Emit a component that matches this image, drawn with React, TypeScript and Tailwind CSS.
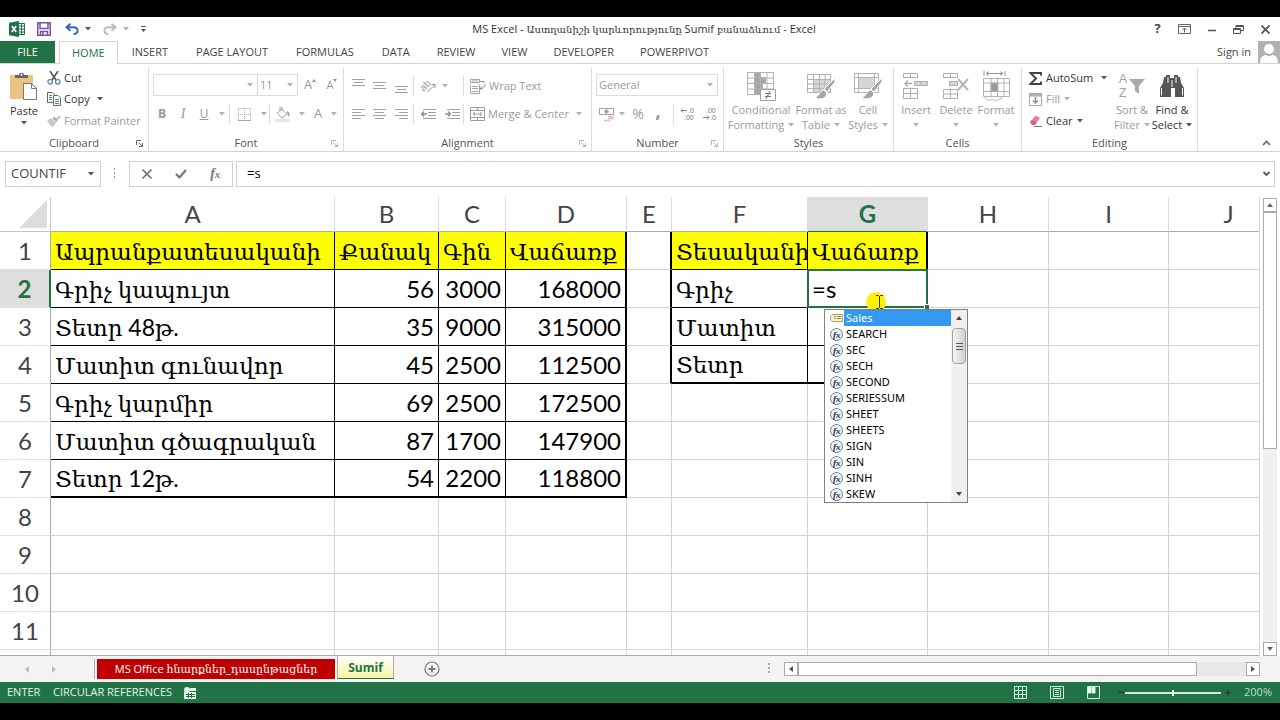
import React, { useState } from 'react';
import clsx from 'clsx';

/* ---------- small shared pieces ---------- */

const Caret: React.FC<{ dark?: boolean }> = ({ dark = false }) => (
  <svg width="6" height="4" viewBox="0 0 6 4" className={clsx('shrink-0', dark ? 'text-[#555]' : 'text-[#b0b0b0]')}>
    <path d="M0 0h6L3 3.5z" fill="currentColor" />
  </svg>
);

const Separator = () => <span className="h-5 w-px shrink-0 bg-[#dcdcdc]" />;

const Launcher: React.FC<{ dark?: boolean }> = ({ dark = false }) => (
  <svg width="7" height="7" viewBox="0 0 7 7" fill="none" stroke={dark ? '#666' : '#b5b5b5'}>
    <path d="M.5 5V.5H5M2.5 2.5l3.5 3.5M6.5 3v3.5H3" />
  </svg>
);

interface GroupProps {
  label: string;
  width: string;
  launcher?: 'dark' | 'light';
  children: React.ReactNode;
}

const Group: React.FC<GroupProps> = ({ label, width, launcher, children }) => (
  <section aria-label={label} className={clsx('flex shrink-0 flex-col border-r border-[#dcdcdc]', width)}>
    <div className="flex-1">{children}</div>
    <div className="flex h-4 items-center px-1 text-[#555]">
      <span className="w-2" />
      <span className="flex-1 text-center">{label}</span>
      <button aria-label={`${label} settings`} className="w-2">
        {launcher && <Launcher dark={launcher === 'dark'} />}
      </button>
    </div>
  </section>
);

interface ToolProps {
  label: string;
  width: string;
  children: React.ReactNode;
}

const Tool: React.FC<ToolProps> = ({ label, width, children }) => (
  <button aria-label={label} className={clsx('flex h-5 shrink-0 items-center justify-center', width)}>
    {children}
  </button>
);

interface BigButtonProps {
  icon: React.ReactNode;
  lines: string[];
  width: string;
  dark?: boolean;
}

const BigButton: React.FC<BigButtonProps> = ({ icon, lines, width, dark = false }) => (
  <button className={clsx('flex shrink-0 flex-col items-center', width, dark ? 'text-[#333]' : 'text-[#9a9a9a]')}>
    <span className="flex h-8 items-center">{icon}</span>
    <span className="h-[15px] leading-[15px] whitespace-nowrap">{lines[0]}</span>
    <span className="flex h-[15px] items-center gap-1 leading-[15px] whitespace-nowrap">
      {lines[1]}
      <Caret dark={dark} />
    </span>
  </button>
);

/* ---------- icons ---------- */

const ExcelLogo = () => (
  <svg width="16" height="16" viewBox="0 0 16 16">
    <path d="M9 2.500h6.500v11H9z" fill="#fff" stroke="#1e7145" />
    <path d="M10 5h5M10 8h5M10 11h5M12.500 3v10" stroke="#1e7145" />
    <path d="M0 1.800 10 0v16L0 14.200z" fill="#1e7145" />
    <path d="m2.800 5 4.400 6M7.200 5l-4.400 6" stroke="#fff" strokeWidth="1.600" />
  </svg>
);

const SaveIcon = () => (
  <svg width="14" height="14" viewBox="0 0 14 14" fill="none" stroke="#7b4fa3" strokeWidth="1.500">
    <path d="M.8.8h12.400v12.400H.8zM3 1v5.500h8V1M3.500 13V9.500h7V13M6 10v3" />
  </svg>
);

const UndoIcon = () => (
  <svg width="14" height="12" viewBox="0 0 14 12" fill="none" stroke="#2b6cb5" strokeWidth="2">
    <path d="M5.500.8 1.500 4.300l4 3.500M2 4.300h6.500c5.500.2 5.500 6.200 0 7" />
  </svg>
);

const RedoIcon = () => (
  <svg width="14" height="12" viewBox="0 0 14 12" fill="none" stroke="#bdbdbd" strokeWidth="2">
    <path d="m8.500.8 4 3.500-4 3.500M12 4.300H5.500c-5.500.2-5.500 6.200 0 7" />
  </svg>
);

const PasteIcon = () => (
  <svg width="28" height="29" viewBox="0 0 28 29">
    <rect x="0" y="3" width="23" height="24" rx="1" fill="#eac282" />
    <path d="M5 6V3h4c0-3 5-3 5 0h4v3z" fill="#666" />
    <circle cx="11.500" cy="2.800" r="1" fill="#fff" />
    <path d="M13.500 11.500h8l5 5v11h-13z" fill="#fff" stroke="#777" />
    <path d="M21.500 11.500v5h5" fill="none" stroke="#777" />
  </svg>
);

const CutIcon = () => (
  <svg width="14" height="14" viewBox="0 0 14 14" fill="none">
    <path d="M3 0 9 9M11 0 5 9" stroke="#555" strokeWidth="1.600" />
    <circle cx="3.200" cy="10.800" r="2.300" stroke="#4f7fab" strokeWidth="1.200" />
    <circle cx="10.800" cy="10.800" r="2.300" stroke="#4f7fab" strokeWidth="1.200" />
  </svg>
);

const CopyIcon = () => (
  <svg width="14" height="14" viewBox="0 0 14 14" fill="#fff" stroke="#666">
    <path d="M.5.5h5l2 2v8h-7z" />
    <path d="M2 3.500h3M2 5.500h3M2 7.500h3" stroke="#4f7fab" />
    <path d="M6.500 3.500h4.500l2.500 2.500v7.500h-7z" />
    <path d="M8 7.500h4M8 9.500h4M8 11.500h4" stroke="#4f7fab" />
  </svg>
);

const PainterIcon = () => (
  <svg width="14" height="13" viewBox="0 0 15 13">
    <path d="m0 5 5-2 5 5-4 4.500C4 12 1.500 8 0 5z" fill="#c9c9c9" />
    <path d="m6 3 2-1.500 3.500 4L10 7z" fill="#a8a8a8" />
    <path d="m9.500 3.500 4-3L15 2l-4 3z" fill="#b5b5b5" />
  </svg>
);

const FontSizeIcon: React.FC<{ grow?: boolean }> = ({ grow = false }) => (
  <svg width="4" height="3" viewBox="0 0 4 3" className="mb-[9px]" fill="#8a97a8">
    <path d={grow ? 'M0 3h4L2 0z' : 'M0 0h4L2 3z'} />
  </svg>
);

const linePaths = {
  top: 'M0 1.500h13M2 4.500h9M0 7.500h13',
  middle: 'M0 4.500h13M2 7.500h9M0 10.500h13',
  bottom: 'M0 8.500h13M2 11.500h9M0 14.500h13',
  left: 'M0 3.500h13M0 6.500h9M0 9.500h13M0 12.500h9',
  center: 'M0 3.500h13M2 6.500h9M0 9.500h13M2 12.500h9',
  right: 'M0 3.500h13M4 6.500h9M0 9.500h13M4 12.500h9',
};

const LinesIcon: React.FC<{ kind: keyof typeof linePaths }> = ({ kind }) => (
  <svg width="13" height="16" viewBox="0 0 13 16" stroke="#a0a0a0">
    <path d={linePaths[kind]} />
  </svg>
);

const IndentIcon: React.FC<{ increase?: boolean }> = ({ increase = false }) => (
  <svg width="15" height="12" viewBox="0 0 15 12" fill="none" stroke="#a0a0a0">
    <path d="M2 1.500h13M7 4.500h8M7 7.500h8M2 10.500h13" />
    <path d={increase ? 'M0 6h5M3 3.500 5.500 6 3 8.500' : 'M6 6H1M3 3.500.5 6 3 8.500'} stroke="#7f93a8" strokeWidth="1.400" />
  </svg>
);

const OrientationIcon = () => (
  <svg width="18" height="18" viewBox="0 0 18 18" className="overflow-visible">
    <text x="1" y="12" fontSize="10" fill="#999" transform="rotate(-45 6 9)" className="font-['Liberation_Sans',sans-serif]">
      ab
    </text>
    <path d="m8 15 8-7M12.500 7.500H16V11" fill="none" stroke="#999" />
  </svg>
);

const WrapIcon = () => (
  <svg width="16" height="15" viewBox="0 0 16 15" fill="none" stroke="#a5a5a5">
    <path d="M.5.5h9v3h-9zM.5 5.500v9h9v-9M2 7.500h6M2 9.500h6M2 12.500h6" />
    <path d="M2 2h6" />
    <path d="M10 2.500h4v1.500M15 5c0 4-2 4.500-5 4.500M12 7.500l-2 2 2 2" stroke="#8093aa" />
  </svg>
);

const MergeIcon = () => (
  <svg width="15" height="14" viewBox="0 0 15 14" fill="none" stroke="#9c9c9c">
    <path d="M.5.5h14v13H.5zM.5 3.500h14M.5 10.500h14M7.500.5v3M7.500 10.500v3" />
    <path d="M3 7h9M5 5 3 7l2 2M10 5l2 2-2 2" stroke="#8a9bb0" />
  </svg>
);

const BordersIcon = () => (
  <svg width="13" height="13" viewBox="0 0 13 13" fill="none" stroke="#a5a5a5">
    <path d="M.5.5h12v12H.5zM6.500 0v13M0 6.500h13" strokeDasharray="1 1" />
    <path d="M0 12.500h13" />
  </svg>
);

const FillColorIcon = () => (
  <svg width="16" height="15" viewBox="0 0 16 15">
    <path d="m2 6 5-4 5 5-5 4zM5 4V0h2v4" fill="#fff" stroke="#a5a5a5" />
    <path d="M12 4c3 1 3 4 2 6-1-1-2-3-2-6z" fill="#a5a5a5" />
    <path d="M0 12h15v3H0z" fill="#eee2e2" />
  </svg>
);

const MoneyIcon = () => (
  <svg width="16" height="15" viewBox="0 0 16 15" fill="none" stroke="#a3a3a3">
    <path d="M.5 1.500h14v6H.5z" />
    <circle cx="7.500" cy="4.500" r="1.700" fill="#a3a3a3" />
    <path d="M9 9.500h6M9 11.500h6M5 13.500h6" stroke="#dcbcbc" strokeWidth="1.500" />
  </svg>
);

const DecimalIcon: React.FC<{ increase?: boolean }> = ({ increase = false }) => (
  <svg width="15" height="16" viewBox="0 0 15 16" fontSize="7" fill="#777" className="font-['Liberation_Sans',sans-serif]">
    <text x={increase ? 8 : 4} y="7">{increase ? '.0' : '.00'}</text>
    <text x={increase ? 4 : 8} y="14">{increase ? '.00' : '.0'}</text>
    <path
      d={increase ? 'M7 4.500H1M3 2.500l-2 2 2 2' : 'M1 11.500h6M5 9.500l2 2-2 2'}
      fill="none"
      stroke="#888"
    />
  </svg>
);

const ConditionalIcon = () => (
  <svg width="29" height="29" viewBox="0 0 29 29" fill="#fff" stroke="#b3b3b3">
    <path d="M.5.5h26v22H.5z" />
    <path d="M7.500.5h6v5h5v6h-3v6h-2v5h-6z" fill="#a6a6a6" />
    <path d="M.5 6h26M.5 11.500h26M.5 17h26M7.500.5v22M13.500.5v22M20 .5v22" fill="none" />
    <path d="M13.500 17.500h15v11h-15z" stroke="#a0a0a0" />
    <path d="M18 21.500h6M18 24.500h6M23 19l-4 8" stroke="#777" fill="none" />
  </svg>
);

const Brush = () => (
  <>
    <path d="m28 6-11 11 3 3 8-10z" fill="#a6a6a6" stroke="#fff" />
    <path d="M17 18c-4 0-4 5-9 8 5 2 11 1 12-5z" fill="#a6a6a6" stroke="#fff" />
  </>
);

const TableFormatIcon = () => (
  <svg width="29" height="29" viewBox="0 0 29 29" fill="#fff" stroke="#b3b3b3">
    <path d="M.5 2.500h23v18H.5z" />
    <path d="M6.500 7.500h17v13h-17z" fill="#d6d6d6" />
    <path d="M.5 7.500h23M.5 12h23M.5 16.500h23M6.500 2.500v18M12.500 2.500v18M18 2.500v18" fill="none" />
    <Brush />
  </svg>
);

const CellStylesIcon = () => (
  <svg width="29" height="29" viewBox="0 0 29 29" fill="#fff" stroke="#b3b3b3">
    <path d="M.5 1.500h24v19H.5zM.5 5.500h24M.5 16.500h24M4.500 1.500v19M20.500 1.500v19" />
    <path d="M5 6h15v10H5z" fill="#d6d6d6" stroke="none" />
    <Brush />
  </svg>
);

const InsertIcon = () => (
  <svg width="26" height="27" viewBox="0 0 26 27" fill="#fff" stroke="#adadad">
    <path d="M.5.5h14v4H.5zM7.500.5v4M.5 15.500h14v10H.5zM7.500 15.500v10M.5 20.500h14" />
    <path d="M11.500 8.500h13v4h-13zM18 8.500v4" fill="#d6d6d6" />
    <path d="M9 10.500H2M5 7.500l-3 3 3 3" fill="none" strokeWidth="1.400" />
  </svg>
);

const DeleteIcon = () => (
  <svg width="26" height="27" viewBox="0 0 26 27" fill="#fff" stroke="#adadad">
    <path d="M.5.5h14v4H.5zM7.500.5v4M.5 16.500h14v9H.5zM7.500 16.500v9M.5 21h14" />
    <path d="M6.500 8.500h8v4h-8z" fill="#d6d6d6" />
    <path d="m15 6 10 11M25 6 15 17" stroke="#bfb3b3" strokeWidth="2" />
  </svg>
);

const FormatIcon = () => (
  <svg width="27" height="30" viewBox="0 0 27 30" fill="#fff" stroke="#b3b3b3">
    <path d="M1 0v5M22 0v5M3 2.500h17M6 .5l-3 2 3 2M17 .5l3 2-3 2" fill="none" stroke="#999" />
    <path d="M.5 7.500h26v18H.5z" />
    <path d="M.5 12h26M.5 20.500h26M8 7.500v18M14.500 7.500v18M21 7.500v18" />
    <path d="M8 12h7v8.500H8z" fill="#999" />
    <path d="M2 26c1 4 5 4 7 2 2 2 5 2 7 0h2l1-2" />
  </svg>
);

const SigmaIcon = () => (
  <svg width="13" height="13" viewBox="0 0 13 13" fill="none" stroke="#444" strokeWidth="2">
    <path d="M12 3.500V1H1.500L7 6.500 1.500 12H12V9.500" />
  </svg>
);

const FillIcon = () => (
  <svg width="13" height="13" viewBox="0 0 13 13" fill="none" stroke="#a5a5a5">
    <path d="M.5.5h12v12H.5z" />
    <path d="M1 1h11v2H1z" fill="#c4c4c4" />
    <path d="M6.500 4v6M4 7.500l2.500 2.500L9 7.500" stroke="#8094a8" strokeWidth="1.500" />
  </svg>
);

const ClearIcon = () => (
  <svg width="13" height="12" viewBox="0 0 13 12">
    <path d="m1 7 6-6.500 4 2.500-5 7H3z" fill="#e57f95" />
    <path d="m1 7 2-2 4.500 3L6 10H3z" fill="#d96480" />
    <path d="M5 11.500h8" stroke="#777" />
  </svg>
);

const SortIcon = () => (
  <svg width="28" height="28" viewBox="0 0 28 28" fill="#a0a0a0" className="font-['Liberation_Sans',sans-serif]">
    <text x="1" y="11" fontSize="12">A</text>
    <text x="1" y="25" fontSize="12">Z</text>
    <path d="M11 7h16l-6 7v8l-4-3v-5z" fill="#a9a9a9" />
  </svg>
);

const FindIcon = () => (
  <svg width="26" height="23" viewBox="0 0 26 23" fill="#555">
    <path d="M5 2h2V0h4v3h4V0h4v2h2l1 6 3 5v9h-9v-9h-4v9H1v-9l3-5z" />
    <path d="M2.500 13v7.500M23.500 13v7.500M9 2v6M17 2v6M13 5v7" stroke="#fff" />
  </svg>
);

const FxBadge = () => (
  <svg width="13" height="13" viewBox="0 0 13 13" className="shrink-0">
    <circle cx="6.500" cy="6.500" r="6" fill="#eef2f8" stroke="#6b7d96" />
    <text x="3" y="9.500" fontSize="9" fontWeight="bold" fontStyle="italic" fill="#27364d" className="font-['Liberation_Serif',serif]">
      fx
    </text>
  </svg>
);

const NameBadge = () => (
  <svg width="13" height="9" viewBox="0 0 13 9" className="shrink-0">
    <path d="M3 .5h9.500v7H3L.5 5.500v-3z" fill="#fbf7cf" stroke="#a8a25a" />
    <path d="M4 2.500h2M4 4.500h2M7 2.500h4M7 4.500h4" stroke="#8a8648" />
  </svg>
);

/* ---------- ribbon ---------- */

const tabs = ['HOME', 'INSERT', 'PAGE LAYOUT', 'FORMULAS', 'DATA', 'REVIEW', 'VIEW', 'DEVELOPER', 'POWERPIVOT'];

const windowButton = 'flex w-[27px] items-center justify-center';

const TitleBar = () => (
  <header className="flex h-6 shrink-0 items-center text-[#444]">
    <div className="flex flex-1 items-center pl-[9px]">
      <ExcelLogo />
      <button aria-label="Save" className="ml-3">
        <SaveIcon />
      </button>
      <button aria-label="Undo" className="ml-[14px] flex items-center gap-[6px]">
        <UndoIcon />
        <Caret dark />
      </button>
      <button aria-label="Redo" className="ml-3 flex items-center gap-[6px]">
        <RedoIcon />
        <Caret />
      </button>
      <button aria-label="Customize toolbar" className="ml-3">
        <svg width="5" height="7" viewBox="0 0 5 7" fill="#555">
          <path d="M0 0h5v1H0zM0 3h5L2.500 6z" />
        </svg>
      </button>
    </div>
    <h1 className="text-[11px] text-[#333]">
      MS Excel - <span className="text-[10px]">Աստղանիշի կարևորությունը</span> Sumif{' '}
      <span className="text-[10px]">բանաձևում</span> - Excel
    </h1>
    <div className="flex flex-1 items-center justify-end pr-px">
      <button aria-label="Help" className={clsx(windowButton, 'text-[13px] font-bold')}>?</button>
      <button aria-label="Ribbon display options" className={windowButton}>
        <svg width="13" height="10" viewBox="0 0 13 10" fill="none" stroke="#666">
          <path d="M.5.5h12v9H.5zM.5 2.500h12M6.500 8.500v-4M4.500 6l2-2 2 2" />
        </svg>
      </button>
      <button aria-label="Minimize" className={windowButton}>
        <svg width="14" height="10" viewBox="0 0 14 10" stroke="#555" strokeWidth="1.500">
          <path d="M3 6.500h8" />
        </svg>
      </button>
      <button aria-label="Restore" className={windowButton}>
        <svg width="11" height="9" viewBox="0 0 11 9" fill="none" stroke="#555">
          <path d="M.5 3.500h7v5h-7zM.5 4.500h7M3 3V.5h7.500v5H8M3 1.500h7" />
        </svg>
      </button>
      <button aria-label="Close" className={windowButton}>
        <svg width="9" height="9" viewBox="0 0 9 9" stroke="#555" strokeWidth="1.800">
          <path d="m.5.5 8 8M8.500.5l-8 8" />
        </svg>
      </button>
    </div>
  </header>
);

const TabBar = () => (
  <nav className="flex h-[23px] shrink-0 border-b border-[#d4d4d4] text-[#444]">
    <button className="w-[55px] bg-[#217346] text-white">FILE</button>
    <div className="ml-1 flex flex-1">
      {tabs.map((tab, i) => (
        <button
          key={tab}
          className={clsx(
            i === 0 && '-mb-px border border-b-0 border-[#d4d4d4] bg-white px-3 text-[#217346]',
            i > 0 && i < 5 && 'px-[14px]',
            i >= 5 && 'px-[13px]'
          )}
        >
          {tab}
        </button>
      ))}
    </div>
    <a href="#signin" className="flex items-center text-[#444]">Sign in</a>
    <svg width="22" height="22" viewBox="0 0 22 22" className="ml-[7px]">
      <path d="M0 0h22v22H0z" fill="#b1b1b1" />
      <circle cx="11" cy="8" r="5" fill="#fff" />
      <path d="M2 22c0-6 3-8 6-8 2 1.500 4 1.500 6 0 3 0 6 2 6 8z" fill="#fff" />
    </svg>
  </nav>
);

const selectClass = 'h-full w-full appearance-none bg-transparent pl-[2px] text-[#999] outline-none';

interface SelectBoxProps {
  label: string;
  value: string;
  width: string;
}

const SelectBox: React.FC<SelectBoxProps> = ({ label, value, width }) => (
  <label className={clsx('flex h-[22px] items-center border border-[#dcdcdc] pr-1', width)}>
    <select aria-label={label} className={selectClass} defaultValue={value}>
      <option>{value}</option>
    </select>
    <Caret />
  </label>
);

const Ribbon = () => (
  <div className="flex h-[88px] shrink-0 border-b border-[#d4d4d4] pt-1 text-[#333]">
    <Group label="Clipboard" width="w-[149px]" launcher="dark">
      <div className="flex pl-1">
        <button className="flex w-10 flex-col items-center pt-1">
          <PasteIcon />
          <span className="h-5 leading-5">Paste</span>
          <Caret dark />
        </button>
        <div className="flex flex-col pl-[3px]">
          <button className="flex h-5 items-center gap-[3px]">
            <CutIcon /> Cut
          </button>
          <button className="flex h-[22px] items-center gap-[3px]">
            <CopyIcon /> Copy
            <span className="ml-1"><Caret dark /></span>
          </button>
          <button className="flex h-[22px] items-center gap-[3px] whitespace-nowrap text-[#9a9a9a]">
            <PainterIcon /> Format Painter
          </button>
        </div>
      </div>
    </Group>

    <Group label="Font" width="w-[195px]" launcher="light">
      <div className="flex items-center pt-[6px] pl-1 text-[#999]">
        <SelectBox label="Font name" value="" width="w-[105px]" />
        <SelectBox label="Font size" value="11" width="w-10 border-l-0" />
        <Tool label="Increase font size" width="w-6">
          <span className="text-[13px]">A</span>
          <FontSizeIcon grow />
        </Tool>
        <Tool label="Decrease font size" width="w-5">
          <span className="text-[11px]">A</span>
          <FontSizeIcon />
        </Tool>
      </div>
      <div className="flex items-center pt-2 pl-[2px] text-[#999]">
        <Tool label="Bold" width="w-[22px]"><b className="text-xs">B</b></Tool>
        <Tool label="Italic" width="w-5"><i className="font-['Liberation_Serif',serif] text-sm">I</i></Tool>
        <Tool label="Underline" width="w-[22px]"><u className="text-xs">U</u></Tool>
        <Tool label="Underline style" width="w-[14px]"><Caret /></Tool>
        <Separator />
        <Tool label="Borders" width="w-7"><BordersIcon /></Tool>
        <Tool label="Border style" width="w-[11px]"><Caret /></Tool>
        <Separator />
        <Tool label="Fill color" width="w-[26px]"><FillColorIcon /></Tool>
        <Tool label="Fill color options" width="w-3"><Caret /></Tool>
        <Tool label="Font color" width="w-5"><span className="text-[13px]">A</span></Tool>
        <Tool label="Font color options" width="w-3"><Caret /></Tool>
      </div>
    </Group>

    <Group label="Alignment" width="w-[248px]" launcher="light">
      <div className="flex items-center pt-2 pl-1 text-[#999]">
        <Tool label="Top align" width="w-[21px]"><LinesIcon kind="top" /></Tool>
        <Tool label="Middle align" width="w-[21px]"><LinesIcon kind="middle" /></Tool>
        <Tool label="Bottom align" width="w-[23px]"><LinesIcon kind="bottom" /></Tool>
        <Separator />
        <Tool label="Orientation" width="w-[28px]"><OrientationIcon /></Tool>
        <Tool label="Orientation options" width="w-[6px]"><Caret /></Tool>
        <span className="w-[15px]" />
        <Separator />
        <button className="ml-[6px] flex h-5 items-center gap-[3px]">
          <WrapIcon /> Wrap Text
        </button>
      </div>
      <div className="flex items-center pt-2 pl-1 text-[#999]">
        <Tool label="Align left" width="w-[21px]"><LinesIcon kind="left" /></Tool>
        <Tool label="Center" width="w-[21px]"><LinesIcon kind="center" /></Tool>
        <Tool label="Align right" width="w-[23px]"><LinesIcon kind="right" /></Tool>
        <Separator />
        <Tool label="Decrease indent" width="w-[28px]"><IndentIcon /></Tool>
        <Tool label="Increase indent" width="w-[21px]"><IndentIcon increase /></Tool>
        <Separator />
        <button className="ml-[6px] flex h-5 items-center gap-[3px] whitespace-nowrap">
          <MergeIcon /> Merge &amp; Center
          <span className="ml-1"><Caret /></span>
        </button>
      </div>
    </Group>

    <Group label="Number" width="w-[132px]" launcher="light">
      <div className="pt-[6px] pl-1">
        <SelectBox label="Number format" value="General" width="w-[122px]" />
      </div>
      <div className="flex items-center pt-2 pl-1 text-[#999]">
        <Tool label="Accounting format" width="w-[22px]"><MoneyIcon /></Tool>
        <Tool label="Accounting options" width="w-2"><Caret /></Tool>
        <Tool label="Percent" width="w-6"><span className="text-sm">%</span></Tool>
        <Tool label="Comma" width="w-4"><span className="mb-2 text-xl leading-3 font-bold">,</span></Tool>
        <span className="w-[7px]" />
        <Separator />
        <Tool label="Increase decimal" width="w-[26px]"><DecimalIcon increase /></Tool>
        <Tool label="Decrease decimal" width="w-[18px]"><DecimalIcon /></Tool>
      </div>
    </Group>

    <Group label="Styles" width="w-[170px]">
      <div className="flex pt-[2px] pl-1">
        <BigButton width="w-[66px]" icon={<ConditionalIcon />} lines={['Conditional', 'Formatting']} />
        <BigButton width="w-[54px]" icon={<TableFormatIcon />} lines={['Format as', 'Table']} />
        <BigButton width="w-[40px]" icon={<CellStylesIcon />} lines={['Cell', 'Styles']} />
      </div>
    </Group>

    <Group label="Cells" width="w-[128px]">
      <div className="flex pt-[2px] pl-[2px]">
        <BigButton width="w-10" icon={<InsertIcon />} lines={['Insert', '']} />
        <BigButton width="w-10" icon={<DeleteIcon />} lines={['Delete', '']} />
        <BigButton width="w-10" icon={<FormatIcon />} lines={['Format', '']} />
      </div>
    </Group>

    <Group label="Editing" width="w-[176px]">
      <div className="flex pl-[7px]">
        <div className="flex w-[83px] flex-col">
          <button className="flex h-5 items-center gap-1">
            <SigmaIcon /> AutoSum
            <span className="ml-1"><Caret dark /></span>
          </button>
          <button className="flex h-[22px] items-center gap-1 text-[#9a9a9a]">
            <FillIcon /> Fill <Caret />
          </button>
          <button className="flex h-[22px] items-center gap-1">
            <ClearIcon /> Clear <Caret dark />
          </button>
        </div>
        <div className="flex pt-[2px]">
          <BigButton width="w-10" icon={<SortIcon />} lines={['Sort &', 'Filter']} />
          <BigButton width="w-10" icon={<FindIcon />} lines={['Find &', 'Select']} dark />
        </div>
      </div>
    </Group>

    <div className="flex flex-1 items-end justify-end pr-[9px] pb-[5px]">
      <button aria-label="Collapse the ribbon">
        <svg width="9" height="6" viewBox="0 0 9 6" fill="none" stroke="#666" strokeWidth="1.700">
          <path d="m1 5 3.500-3.500L8 5" />
        </svg>
      </button>
    </div>
  </div>
);

interface FormulaProps {
  formula: string;
  onChange: (value: string) => void;
}

const FormulaBar: React.FC<FormulaProps> = ({ formula, onChange }) => (
  <div className="mt-[9px] mb-[10px] flex h-[26px] shrink-0 pr-[5px] pl-[5px] text-[#444]">
    <label className="flex w-24 items-center border border-[#d0d0d0] pr-[6px]">
      <input aria-label="Name box" defaultValue="COUNTIF" className="w-full min-w-0 flex-1 pl-[5px] text-[13px] outline-none" />
      <Caret dark />
    </label>
    <svg width="28" height="24" viewBox="0 0 28 24" fill="#999">
      <path d="M13 7h1v2h-1zM13 11h1v2h-1zM13 15h1v2h-1z" />
    </svg>
    <div className="flex w-[104px] items-center justify-around border border-[#d0d0d0]">
      <button aria-label="Cancel">
        <svg width="10" height="10" viewBox="0 0 10 10" stroke="#777" strokeWidth="1.600">
          <path d="m.5.5 9 9M9.500.5l-9 9" />
        </svg>
      </button>
      <button aria-label="Enter">
        <svg width="12" height="10" viewBox="0 0 12 10" fill="none" stroke="#777" strokeWidth="2.200">
          <path d="m1 5 3.500 3.500L11 1" />
        </svg>
      </button>
      <button aria-label="Insert function" className="font-['Liberation_Serif',serif] text-sm font-bold text-[#777] italic">
        f<span className="text-[11px]">x</span>
      </button>
    </div>
    <div className="ml-[3px] flex flex-1 items-center border border-[#d0d0d0] pr-1">
      <input
        aria-label="Formula"
        value={formula}
        onChange={(e) => onChange(e.target.value)}
        className="min-w-0 flex-1 pl-[10px] text-[13px] text-black outline-none"
      />
      <button aria-label="Expand formula bar">
        <svg width="7" height="6" viewBox="0 0 7 6" fill="none" stroke="#555" strokeWidth="1.800">
          <path d="m.5 1 3 3 3-3" />
        </svg>
      </button>
    </div>
  </div>
);

/* ---------- sheet ---------- */

const columns = [
  { name: 'A', width: 'w-[284px]' },
  { name: 'B', width: 'w-[104px]' },
  { name: 'C', width: 'w-[67px]' },
  { name: 'D', width: 'w-[121px]' },
  { name: 'E', width: 'w-[45px]' },
  { name: 'F', width: 'w-[136px]' },
  { name: 'G', width: 'w-[120px]' },
  { name: 'H', width: 'w-[121px]' },
  { name: 'I', width: 'w-[120px]' },
  { name: 'J', width: 'w-[120px]' },
];

const cells: Record<number, Record<string, string>> = {
  1: { A: 'Ապրանքատեսականի', B: 'Քանակ', C: 'Գին', D: 'Վաճառք', F: 'Տեսականի', G: 'Վաճառք' },
  2: { A: 'Գրիչ կապույտ', B: '56', C: '3000', D: '168000', F: 'Գրիչ' },
  3: { A: 'Տետր 48թ.', B: '35', C: '9000', D: '315000', F: 'Մատիտ' },
  4: { A: 'Մատիտ գունավոր', B: '45', C: '2500', D: '112500', F: 'Տետր' },
  5: { A: 'Գրիչ կարմիր', B: '69', C: '2500', D: '172500' },
  6: { A: 'Մատիտ գծագրական', B: '87', C: '1700', D: '147900' },
  7: { A: 'Տետր 12թ.', B: '54', C: '2200', D: '118800' },
};

const rows = [1, 2, 3, 4, 5, 6, 7, 8, 9, 10, 11, 12];

const suggestions = [
  'Sales', 'SEARCH', 'SEC', 'SECH', 'SECOND', 'SERIESSUM', 'SHEET', 'SHEETS', 'SIGN', 'SIN', 'SINH', 'SKEW',
];

const borderClass = (col: string, row: number) => {
  const inMain = 'ABCD'.includes(col) && row <= 7;
  const inSide = 'FG'.includes(col) && row <= 4;
  return clsx(
    inMain || inSide ? 'border-r-black border-b-black' : 'border-b-[#d4d4d4]',
    !inMain && !inSide && (col === 'E' && row <= 4 ? 'border-r-black' : 'border-r-[#d4d4d4]'),
    (col === 'D' && inMain) || (col === 'G' && inSide) || (col === 'E' && row <= 4) ? 'border-r-2' : 'border-r',
    (inMain && row === 7) || (inSide && row === 4) ? 'border-b-2' : 'border-b',
    (inMain || inSide) && row === 1 && 'bg-[#ffff00]'
  );
};

const Suggestions = () => (
  <div className="absolute top-[39px] left-4 z-20 flex w-36 border border-[#808080] bg-white font-['Noto_Sans',sans-serif] text-[11px] text-black">
    <ul role="listbox" aria-label="Functions" className="flex-1">
      {suggestions.map((name, i) => (
        <li key={name} role="option" aria-selected={i === 0} className="flex h-4 items-center pl-[5px]">
          {i === 0 ? <NameBadge /> : <FxBadge />}
          <span className={clsx('ml-px flex-1 pl-[2px] leading-4', i === 0 && 'bg-[#3399f0] text-white')}>{name}</span>
        </li>
      ))}
    </ul>
    <div className="flex w-4 flex-col items-center justify-between bg-[#f0f0f0] py-[6px]">
      <svg width="6" height="4" viewBox="0 0 6 4" fill="#444"><path d="M0 4h6L3 0z" /></svg>
      <div className="mt-2 flex h-9 w-[14px] flex-col items-center justify-center gap-[2px] rounded-sm border border-[#a0a0a0] bg-linear-to-r from-[#f5f5f5] to-[#cfcfcf]">
        <span className="h-px w-[7px] bg-[#555]" />
        <span className="h-px w-[7px] bg-[#555]" />
        <span className="h-px w-[7px] bg-[#555]" />
      </div>
      <span className="flex-1" />
      <svg width="6" height="4" viewBox="0 0 6 4" fill="#444"><path d="M0 0h6L3 4z" /></svg>
    </div>
  </div>
);

const ActiveCell: React.FC<FormulaProps> = ({ formula, onChange }) => (
  <>
    <input
      aria-label="Cell G2"
      value={formula}
      onChange={(e) => onChange(e.target.value)}
      className="block h-8 w-full bg-transparent outline-none"
    />
    <span className="pointer-events-none absolute -top-px -right-[2px] -bottom-px -left-px border-2 border-[#217346]" />
    <span className="absolute -right-[3px] -bottom-[2px] size-[5px] border-t border-l border-white bg-[#217346]" />
    <span className="absolute top-[22px] left-[58px] z-10 size-5 rounded-full bg-[#fff200]" />
    <svg width="7" height="14" viewBox="0 0 7 14" className="absolute top-[25px] left-[68px] z-10" stroke="#333" fill="none">
      <path d="M0 .5h2.500l1 1 1-1H7M3.500 1v12M0 13.500h2.500l1-1 1 1H7" />
    </svg>
    <Suggestions />
  </>
);

const Sheet: React.FC<FormulaProps> = ({ formula, onChange }) => (
  <div className="min-w-0 flex-1 overflow-hidden border-b border-[#ababab]">
    <table className="w-0 table-fixed border-separate border-spacing-0 font-['Lato','DejaVu_Serif',serif] text-2xl">
      <colgroup>
        <col className="w-[51px]" />
        {columns.map((c) => <col key={c.name} className={c.width} />)}
      </colgroup>
      <thead>
        <tr className="h-[35px]">
          <th className="border-r border-b border-[#c6c6c6] p-0">
            <svg width="28" height="28" viewBox="0 0 28 28" className="ml-[19px]">
              <path d="M28 0v28H0z" fill="#dcdcdc" />
            </svg>
          </th>
          {columns.map((c) => (
            <th
              key={c.name}
              className={clsx(
                'border-r border-b border-r-[#dcdcdc] p-0',
                c.name === 'G' ? 'border-b-[#217346] bg-[#dedede] font-bold text-[#217346]' : 'border-b-[#ababab] font-normal text-[#444]'
              )}
            >
              {c.name}
            </th>
          ))}
        </tr>
      </thead>
      <tbody>
        {rows.map((row) => (
          <tr key={row} className="h-[38px]">
            <th
              className={clsx(
                'border-r border-b border-b-[#e1e1e1] p-0 leading-8',
                row === 2 ? 'border-r-2 border-r-[#217346] bg-[#dedede] font-bold text-[#217346]' : 'border-r-[#ababab] font-normal text-[#444]'
              )}
            >
              {row}
            </th>
            {columns.map(({ name }) => {
              const active = name === 'G' && row === 2;
              const numeric = 'BCD'.includes(name) && row > 1;
              return (
                <td
                  key={name}
                  className={clsx(
                    'py-0 pr-1 pl-1 leading-8 whitespace-nowrap text-black',
                    active ? 'relative' : 'overflow-hidden',
                    numeric && 'text-right',
                    !numeric && !active && 'text-[23px]',
                    borderClass(name, row)
                  )}
                >
                  {active ? <ActiveCell formula={formula} onChange={onChange} /> : cells[row]?.[name]}
                </td>
              );
            })}
          </tr>
        ))}
      </tbody>
    </table>
  </div>
);

const VerticalScroll = () => (
  <div className="flex w-[21px] shrink-0 flex-col items-center border-l border-[#d4d4d4] pt-px">
    <button aria-label="Scroll up" className="flex size-[14px] shrink-0 items-center justify-center border border-[#ababab]">
      <svg width="6" height="4" viewBox="0 0 6 4" fill="#666"><path d="M0 4h6L3 0z" /></svg>
    </button>
    <div className="flex w-[14px] flex-1 flex-col bg-[#f0f0f0]">
      <div className="h-[55%] border border-[#ababab] bg-white" />
    </div>
    <button aria-label="Scroll down" className="flex size-[14px] shrink-0 items-center justify-center border border-[#ababab]">
      <svg width="6" height="4" viewBox="0 0 6 4" fill="#666"><path d="M0 0h6L3 4z" /></svg>
    </button>
  </div>
);

const SheetTabs = () => (
  <div className="flex h-[26px] shrink-0 bg-[#f3f3f3]">
    <div className="flex w-[94px] items-center gap-[23px] pl-[25px]">
      <button aria-label="Previous sheet">
        <svg width="4" height="7" viewBox="0 0 4 7" fill="#bbb"><path d="M4 0v7L0 3.500z" /></svg>
      </button>
      <button aria-label="Next sheet">
        <svg width="4" height="7" viewBox="0 0 4 7" fill="#bbb"><path d="M0 0v7l4-3.500z" /></svg>
      </button>
    </div>
    <span className="mt-[3px] h-5 w-px bg-[#ababab]" />
    <button className="mt-[3px] ml-[2px] h-5 w-[238px] bg-[#c00000] text-[11px] whitespace-nowrap text-white">
      MS Office հնարքներ_դասընթացներ
    </button>
    <button className="ml-[2px] h-[23px] w-[57px] border-x border-b border-x-[#ababab] border-b-[#217346] bg-linear-to-b from-white to-[#f7f5a0] pt-[2px] text-[12px] font-bold text-[#217346]">
      Sumif
    </button>
    <button aria-label="New sheet" className="ml-[30px]">
      <svg width="16" height="16" viewBox="0 0 16 16" fill="none" stroke="#777">
        <circle cx="8" cy="8" r="7" strokeWidth="1.200" />
        <path d="M8 4.500v7M4.500 8h7" strokeWidth="1.800" />
      </svg>
    </button>
    <div className="flex flex-1 items-center justify-end pr-5">
      <svg width="2" height="12" viewBox="0 0 2 12" fill="#aaa" className="mr-[14px]">
        <path d="M0 0h2v2H0zM0 4h2v2H0zM0 8h2v2H0z" />
      </svg>
      <button aria-label="Scroll left" className="flex size-[14px] items-center justify-center border border-[#ababab] bg-white">
        <svg width="4" height="6" viewBox="0 0 4 6" fill="#555"><path d="M4 0v6L0 3z" /></svg>
      </button>
      <div className="flex h-[14px] w-[448px] bg-[#e8e8e8]">
        <div className="w-[89%] border border-[#ababab] bg-white" />
      </div>
      <button aria-label="Scroll right" className="flex size-[14px] items-center justify-center border border-[#ababab] bg-white">
        <svg width="4" height="6" viewBox="0 0 4 6" fill="#555"><path d="M0 0v6l4-3z" /></svg>
      </button>
    </div>
  </div>
);

const StatusBar = () => (
  <footer className="flex h-[21px] shrink-0 items-center bg-[#217346] pr-2 pl-[7px] text-[#e3f3e8]">
    <span className="w-[46px]">ENTER</span>
    <span className="w-[131px]">CIRCULAR REFERENCES</span>
    <button aria-label="Macro recording">
      <svg width="12" height="12" viewBox="0 0 12 12" fill="#e3f3e8">
        <path d="M6 1h6v3H6zM0 5h12v7H0z" />
        <circle cx="3" cy="3" r="3" />
        <path d="M2 7.500h9M2 9.500h9M4.500 6v5M7.500 6v5" stroke="#217346" fill="none" />
      </svg>
    </button>
    <div className="flex flex-1 items-center justify-end gap-[23px]">
      <button aria-label="Normal view">
        <svg width="13" height="13" viewBox="0 0 13 13" fill="none" stroke="#cfeed9">
          <path d="M.5.5h12v12H.5zM4.500 0v13M8.500 0v13M0 4.500h13M0 8.500h13" />
        </svg>
      </button>
      <button aria-label="Page layout view">
        <svg width="14" height="13" viewBox="0 0 14 13" fill="none" stroke="#cfeed9">
          <path d="M.5.5h13v12H.5zM3.500 2.500h7v8h-7zM5 4.500h4M5 6.500h4M5 8.500h4" />
        </svg>
      </button>
      <button aria-label="Page break view">
        <svg width="13" height="13" viewBox="0 0 13 13" fill="none" stroke="#cfeed9">
          <path d="M.5.5h12v12H.5z" />
          <path d="M1 1h3v6H1zM5 1h3v6H5z" fill="#fff" />
        </svg>
      </button>
    </div>
    <button aria-label="Zoom out" className="ml-[18px] w-[6px] font-bold text-[#0c4a28]">−</button>
    <input
      type="range"
      aria-label="Zoom"
      min={0}
      max={100}
      defaultValue={50}
      className="mx-px h-[2px] w-24 appearance-none bg-[#cfeed9] [&::-webkit-slider-thumb]:h-[6px] [&::-webkit-slider-thumb]:w-[2px] [&::-webkit-slider-thumb]:appearance-none [&::-webkit-slider-thumb]:bg-white"
    />
    <button aria-label="Zoom in" className="ml-[2px] w-2 font-bold text-[#0c4a28]">+</button>
    <span className="ml-3 text-[#b9dcc6]">200%</span>
  </footer>
);

const App: React.FC = () => {
  const [formula, setFormula] = useState('=s');

  return (
    <div className="flex h-screen flex-col overflow-hidden bg-black py-[17px] font-['Open_Sans','DejaVu_Serif',sans-serif] text-[11px]">
      <main className="flex min-h-0 flex-1 flex-col bg-white">
        <TitleBar />
        <TabBar />
        <Ribbon />
        <FormulaBar formula={formula} onChange={setFormula} />
        <div className="flex min-h-0 flex-1">
          <Sheet formula={formula} onChange={setFormula} />
          <VerticalScroll />
        </div>
        <SheetTabs />
        <StatusBar />
      </main>
    </div>
  );
};

export default App;
